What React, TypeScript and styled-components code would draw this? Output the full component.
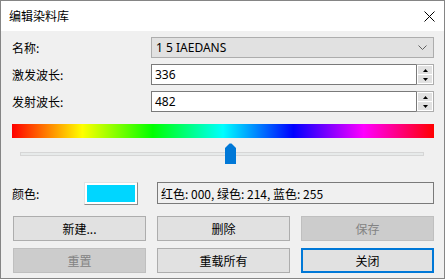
import styled, { createGlobalStyle } from 'styled-components';

const GlobalStyle = createGlobalStyle`
	body {
		margin: 0;
		background: #ffffff;
	}
	* {
		box-sizing: border-box;
	}
`;

const UI_FONT = `"Noto Sans CJK SC", "Noto Sans", sans-serif`;

const Window = styled.div`
	width: 445px;
	height: 279px;
	border: 1px solid #858585;
	background: #f0f0f0;
	display: flex;
	flex-direction: column;
	font-family: ${UI_FONT};
	font-size: 12px;
	color: #000;
`;

const TitleBar = styled.div`
	height: 30px;
	background: #ffffff;
	display: flex;
	align-items: center;
	justify-content: space-between;
	padding: 0 9px 0 8px;
`;

const Title = styled.span`
	font-size: 12px;
	line-height: 16px;
`;

const Body = styled.div`
	flex: 1;
	display: flex;
	flex-direction: column;
	padding: 6px 10px 0 11px;
`;

const Form = styled.div`
	display: grid;
	grid-template-columns: 139px 1fr;
	grid-auto-rows: 21px;
	row-gap: 6px;
	align-items: center;
`;

const Label = styled.span`
	line-height: 16px;
`;

const Combo = styled.div`
	height: 21px;
	border: 1px solid #adadad;
	background: #e1e1e1;
	display: flex;
	align-items: center;
	justify-content: space-between;
	padding: 0 6px 0 4px;
	font-family: "Noto Sans", sans-serif;
`;

const Spin = styled.div`
	height: 21px;
	display: flex;
`;

const SpinInput = styled.div`
	flex: 1;
	border: 1px solid #7a7a7a;
	border-right: none;
	background: #ffffff;
	display: flex;
	align-items: center;
	padding-left: 3px;
	font-family: "Noto Sans", sans-serif;
`;

const SpinButtons = styled.div`
	width: 18px;
	display: flex;
	flex-direction: column;
	border: 1px solid #adadad;
	border-left: 1px solid #7a7a7a;
	background: #ffffff;
	padding: 1px;
	gap: 1px;
`;

const SpinArrow = styled.div`
	flex: 1;
	background: #e1e1e1;
	display: flex;
	align-items: center;
	justify-content: center;
`;

const Spectrum = styled.div`
	margin-top: 12px;
	height: 14px;
	background: linear-gradient(
		to right,
		#ff0000 0%,
		#ffff00 16.67%,
		#00ff00 33.33%,
		#00ffff 50%,
		#0000ff 66.67%,
		#ff00ff 83.33%,
		#ff0000 100%
	);
`;

const Slider = styled.div`
	margin-top: 5px;
	height: 21px;
	padding: 0 10px 0 8px;
	display: flex;
	align-items: center;
`;

const Track = styled.div`
	position: relative;
	flex: 1;
	height: 4px;
	margin-top: 1px;
	background: #e7eaea;
	border: 1px solid #d6d6d6;
`;

const Thumb = styled.svg`
	position: absolute;
	top: -10px;
	display: block;
`;

const ColorRow = styled.div`
	margin-top: 18px;
	height: 23px;
	display: flex;
	align-items: flex-start;
`;

const ColorLabel = styled.span`
	width: 72px;
	line-height: 23px;
`;

const Swatch = styled.div<{ $color: string }>`
	width: 54px;
	height: 23px;
	border: 1px solid;
	border-color: #e3e3e3 #8c8c8c #8c8c8c #e3e3e3;
	background: #ffffff;
	padding: 2px;
	&::after {
		content: '';
		display: block;
		width: 100%;
		height: 100%;
		background: ${(p) => p.$color};
	}
`;

const ColorText = styled.div`
	margin-left: 19px;
	flex: 1;
	height: 22px;
	border: 1px solid #7a7a7a;
	display: flex;
	align-items: center;
	padding-left: 3px;
`;

const Buttons = styled.div`
	margin-top: 11px;
	display: grid;
	grid-template-columns: repeat(3, 1fr);
	grid-auto-rows: 25px;
	column-gap: 11px;
	row-gap: 7px;
	padding-left: 1px;
`;

const Button = styled.button<{ $default?: boolean }>`
	font-family: ${UI_FONT};
	font-size: 12px;
	color: #000;
	background: #e1e1e1;
	border: ${(p) => (p.$default ? '2px solid #0078d7' : '1px solid #adadad')};
	padding: 0;
	&:disabled {
		background: #cccccc;
		border-color: #bfbfbf;
		color: #838383;
	}
`;

const Chevron = () => (
	<svg width="9" height="5" viewBox="0 0 9 5">
		<polyline points="0.5,0.5 4.5,4.5 8.5,0.5" fill="none" stroke="#606060" strokeWidth="1" />
	</svg>
);

const CloseIcon = () => (
	<svg width="11" height="11" viewBox="0 0 11 11">
		<path d="M0.5 0.5 L10.5 10.5 M10.5 0.5 L0.5 10.5" stroke="#000" strokeWidth="1" />
	</svg>
);

const Triangle = ({ up }: { up?: boolean }) => (
	<svg width="5" height="3" viewBox="0 0 5 3">
		<polygon points={up ? '0,3 2.5,0 5,3' : '0,0 2.5,3 5,0'} fill="#000" />
	</svg>
);

const SpinBox = ({ value }: { value: string }) => (
	<Spin>
		<SpinInput>{value}</SpinInput>
		<SpinButtons>
			<SpinArrow>
				<Triangle up />
			</SpinArrow>
			<SpinArrow>
				<Triangle />
			</SpinArrow>
		</SpinButtons>
	</Spin>
);

export default function App() {
	const hue = 190 / 360;
	return (
		<>
			<GlobalStyle />
			<Window>
				<TitleBar>
					<Title>编辑染料库</Title>
					<CloseIcon />
				</TitleBar>
				<Body>
					<Form>
						<Label>名称:</Label>
						<Combo>
							<span>1 5 IAEDANS</span>
							<Chevron />
						</Combo>
						<Label>激发波长:</Label>
						<SpinBox value="336" />
						<Label>发射波长:</Label>
						<SpinBox value="482" />
					</Form>
					<Spectrum />
					<Slider>
						<Track>
							<Thumb
								width="11"
								height="21"
								viewBox="0 0 11 21"
								style={{ left: `calc(${hue * 100}% - 8px)` }}
							>
								<path d="M0 5 L4.5 0.5 L6.5 0.5 L11 5 L11 21 L0 21 Z" fill="#0078d7" />
							</Thumb>
						</Track>
					</Slider>
					<ColorRow>
						<ColorLabel>颜色:</ColorLabel>
						<Swatch $color="#00d6ff" />
						<ColorText>红色: 000, 绿色: 214, 蓝色: 255</ColorText>
					</ColorRow>
					<Buttons>
						<Button>新建...</Button>
						<Button>删除</Button>
						<Button disabled>保存</Button>
						<Button disabled>重置</Button>
						<Button>重载所有</Button>
						<Button $default>关闭</Button>
					</Buttons>
				</Body>
			</Window>
		</>
	);
}
